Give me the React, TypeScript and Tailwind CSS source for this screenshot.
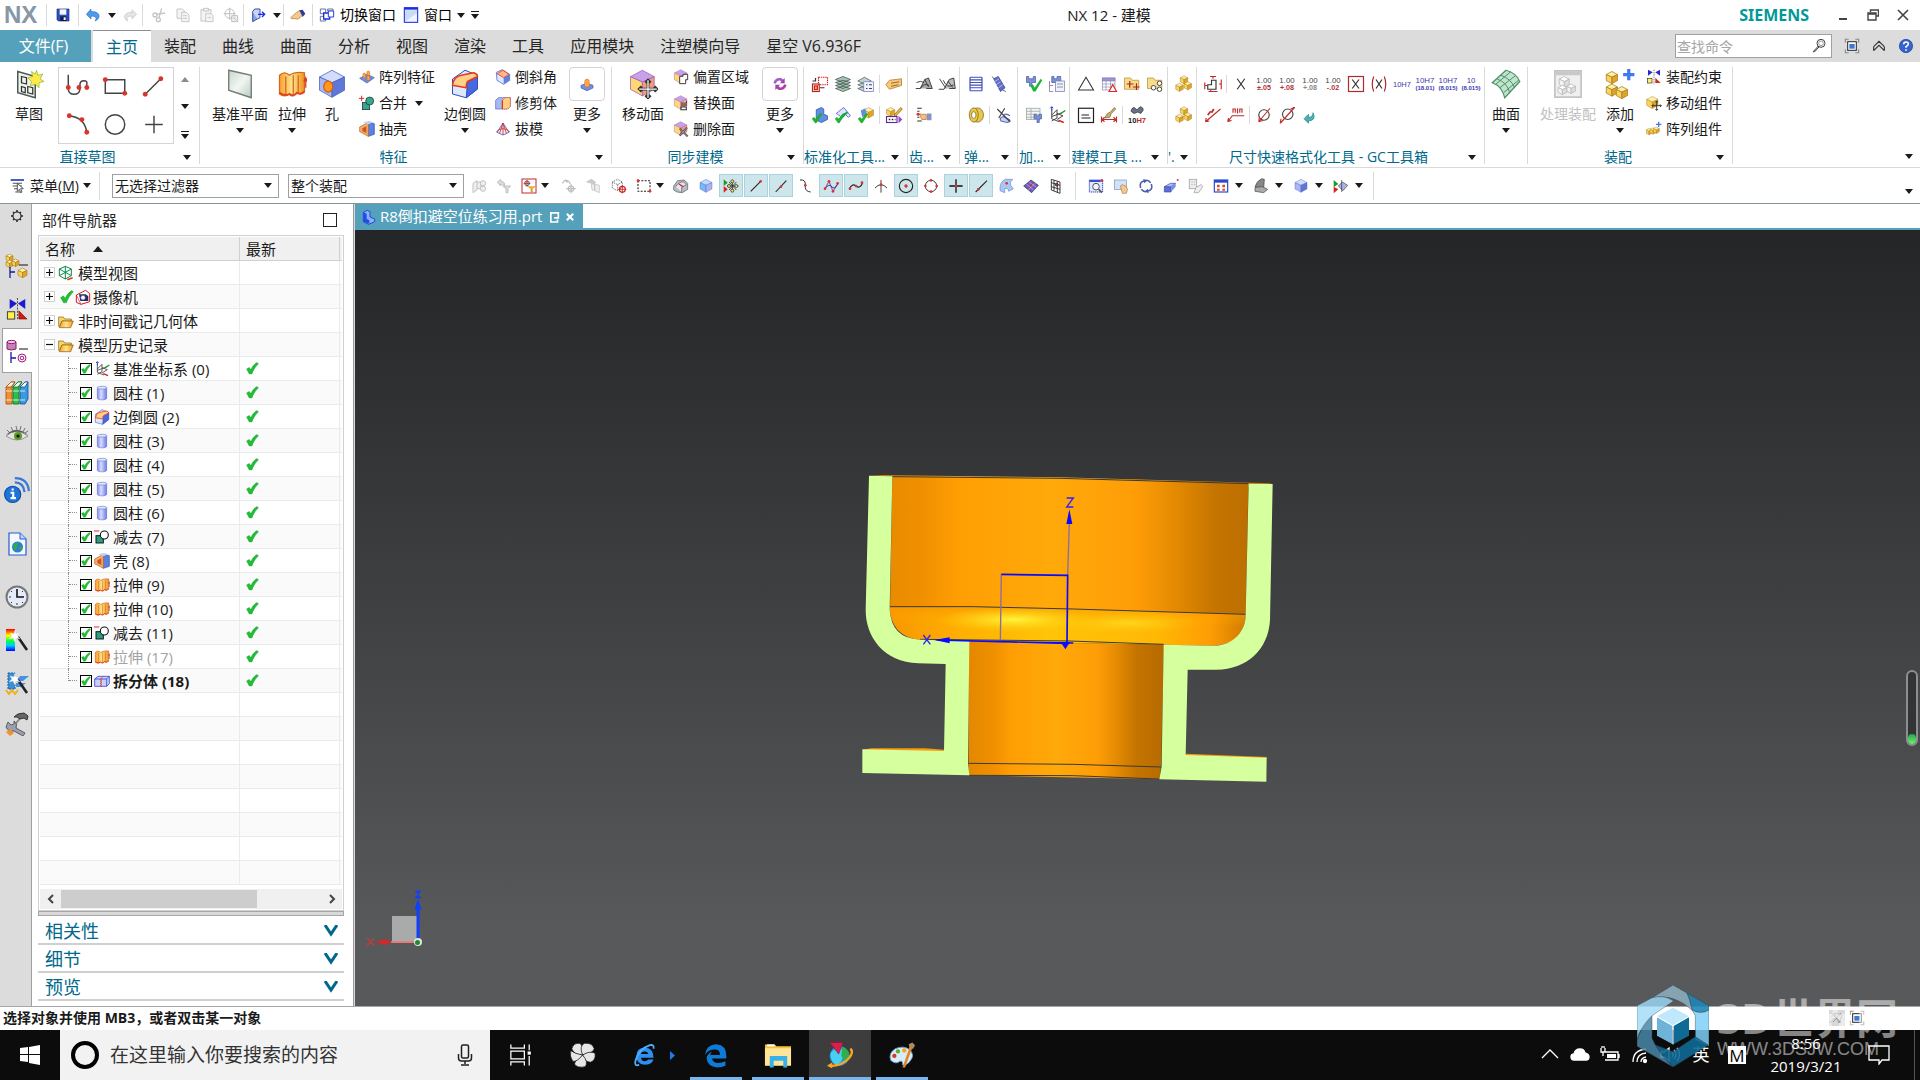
import React, { useState } from 'react';
import clsx from 'clsx';

/* ---------- drawing helpers, all on a 24 unit grid ---------- */

interface CubeProps {
  x?: number;
  y?: number;
  s?: number;
  top?: string;
  left?: string;
  right?: string;
  line?: string;
}

const Cube = ({ x = 3, y = 2, s = 18, top = '#d3dcfb', left = '#a9b8f3', right = '#5f78d8', line = '#4a5fb8' }: CubeProps) => (
  <g stroke={line} strokeWidth={0.6} strokeLinejoin="round">
    <path d={`M${x} ${y + s * 0.27}L${x + s / 2} ${y}L${x + s} ${y + s * 0.27}L${x + s / 2} ${y + s * 0.5}Z`} fill={top} />
    <path d={`M${x} ${y + s * 0.27}L${x + s / 2} ${y + s * 0.5}V${y + s * 1.08}L${x} ${y + s * 0.8}Z`} fill={left} />
    <path d={`M${x + s} ${y + s * 0.27}L${x + s / 2} ${y + s * 0.5}V${y + s * 1.08}L${x + s} ${y + s * 0.8}Z`} fill={right} />
  </g>
);

const Gold = (p: CubeProps) => <Cube top="#fff0a8" left="#f8d458" right="#dfa52a" line="#a87a1c" {...p} />;

const Violet = () => <Cube x={2} y={1} s={19} top="#c9a0ea" left="#ffd873" right="#f39a7c" line="#9a5fb5" />;

const Dot = ({ x, y, r = 2, c = '#d9342b' }: { x: number; y: number; r?: number; c?: string }) => (
  <circle cx={x} cy={y} r={r} fill={c} />
);

const Tick = ({ x = 0, y = 0 }: { x?: number; y?: number }) => (
  <path d="M2 13l4-3 3 4 8-11 4 1L10 21H8z" fill="#1fb52f" stroke="#0c8a1c" strokeWidth={0.6} transform={`translate(${x} ${y}) scale(.7)`} />
);

const Dim = ({ up, low, c = '#b03038', lowC }: { up: string; low: string; c?: string; lowC?: string }) => (
  <g fontFamily="Liberation Sans" textAnchor="middle" fontSize={10.5}>
    <text x={12} y={10} fill={c === '#b03038' ? '#444' : c}>{up}</text>
    <text x={12} y={20} fill={lowC ?? c} fontSize={low.length > 5 ? 8 : 9.5} fontWeight="bold">{low}</text>
  </g>
);

const Roll = () => (
  <g>
    <path d="M5 4v16c0 3 14 3 14 0V4z" fill="url(#cylFill)" stroke="#5566c8" strokeWidth={0.8} />
    <ellipse cx={12} cy={4} rx={7} ry={2.2} fill="#dfe5ff" stroke="#5566c8" strokeWidth={0.8} />
  </g>
);

const Extrude = () => (
  <g stroke="#d2691e" strokeWidth={1}>
    <path d="M2 5q4-4 8 0 4-3 12-2v15q-3 3-6 1-3 3-6 1-4 3-8 0z" fill="url(#goldFill)" />
    <path d="M7 6v15M13 5v15M17 5v14" fill="none" />
    <path d="M2 19q4 3 8 1 3 3 6-1 3 2 6-1" fill="none" stroke="#e2441f" strokeWidth={1.5} />
  </g>
);

const Blend = () => (
  <g strokeLinejoin="round" strokeWidth={0.8}>
    <path d="M2 8L12 1L22 5V16L13 23L2 20Z" fill="#dfe7ff" stroke="#3050c0" />
    <path d="M14 11L22 5V16L13 23Z" fill="#4668e0" stroke="#3050c0" />
    <path d="M2 13Q3 6 9 5L19 3Q22 4 22 6L14 10Q13 11 13 15Z" fill="#ffd08a" stroke="#e8381c" strokeWidth={1.2} />
  </g>
);

const Wand = () => (
  <g>
    <path d="M13 9L22 22" stroke="#222" strokeWidth={2.6} />
    <path d="M10 2l1 4 4-1-3 3 3 3-4-1-1 4-2-4-4 1 3-3-2-3 4 1z" fill="#fff" stroke="#ddd" strokeWidth={0.4} />
  </g>
);

const SheetTable = () => (
  <g stroke="#7780a8" strokeWidth={0.8}>
    <rect x={3} y={4} width={17} height={16} fill="#fff" />
    <rect x={3} y={4} width={17} height={4} fill="#a58fd8" />
    <path d="M3 12H20M3 16H20M8 8V20M14 8V20" />
  </g>
);

const icons: Record<string, React.ReactNode> = {
  save: (<g><path d="M3 3h18v18H5l-2-2z" fill="#2f4fc0" stroke="#142a80" /><rect x={7} y={3.5} width={10} height={8} fill="#f4f6ff" /><rect x={8} y={14} width={9} height={7} fill="#111a50" /><rect x={13} y={15.500} width={3} height={4} fill="#fff" /></g>),
  undo: <path d="M2 11L9 3v4c9-1 13 4 12 8-1 3-3 5-6 6 3-4 2-8-6-7v4z" fill="#4d9bea" stroke="#1c5fc0" strokeWidth={0.8} />,
  redo: <path d="M22 11L15 4v4C7 7 3 12 4 16c1 3 2 4 5 5-3-4-1-8 6-7v4z" fill="#e4e4e4" stroke="#bbb" strokeWidth={0.8} />,
  cut: <g fill="none" stroke="#c4c4c4" strokeWidth={2}><circle cx={6} cy={12} r={3} /><circle cx={11} cy={19} r={3} /><path d="M8 11L21 9M12 16L16 2" /></g>,
  copy: <g fill="#f4f4f4" stroke="#c4c4c4" strokeWidth={1.4}><path d="M3 3h8l3 3v11H3z" /><path d="M10 8h7l4 4v10H10zM12 13h6M12 17h6" /></g>,
  paste: <g fill="#f4f4f4" stroke="#c4c4c4" strokeWidth={1.4}><rect x={3} y={4} width={15} height={17} /><rect x={7} y={2} width={7} height={4} /><path d="M10 10h8l3 3v9H10zM13 16h5" /></g>,
  move: <g fill="none" stroke="#bbb" strokeWidth={1.4}><circle cx={10} cy={10} r={7} /><path d="M10 1V19M1 10H19" /><path d="M13 13h9v9h-9zM15 15l5 5" fill="#eee" /></g>,
  exit: <g stroke="#1b2f8a" strokeWidth={1.2}><path d="M4 7l7-4v15l-7 4z" fill="#8aa4e8" /><path d="M4 7l3-4h8v13l-4 2" fill="#c8d4f8" /><path d="M12 11h9m-3-4l4 4-4 4" fill="none" stroke="#1c2fe0" strokeWidth={2} /></g>,
  hand: <g><path d="M1 16l9-8 5-3 5 6-5 5-3 2H9l-3-1-3 1z" fill="#f5c987" stroke="#a8773a" /><path d="M14 5l5-1 4 6-4 5z" fill="#2f3d9a" /></g>,
  switch: <g fill="#fff" stroke="#5a6a9a" strokeWidth={1.4}><path d="M2 3h8v7H2zM2 14h8v7H2zM13 3h8v3h-8z" /><path d="M7 9h9v9H7z" stroke="#1c2fe0" strokeWidth={2} /><path d="M14 6h8v9h-8z" stroke="#1c2fe0" /></g>,
  window: <g><rect x={2} y={1} width={20} height={22} fill="#eef4ff" stroke="#1c2fe0" strokeWidth={1.6} /><rect x={2} y={1} width={20} height={3} fill="#1c2fe0" /><path d="M3 5h18v4L3 22z" fill="#c8dcf8" /></g>,
  full: <g><path d="M2 7V2h5M17 2h5v5M22 17v5h-5M7 22H2v-5" fill="none" stroke="#888" strokeWidth={1.6} /><rect x={5.500} y={5.500} width={13} height={13} fill="#fff" stroke="#333" strokeWidth={1.6} /><rect x={8} y={9} width={8} height={7} fill="#3f78d0" /></g>,
  up: <path d="M4 13l8-8 8 8M4 19l8-8 8 8M4 13v6M20 13v6" fill="none" stroke="#333" strokeWidth={1.7} />,
  help: <g><circle cx={12} cy={12} r={10} fill="#3664cc" stroke="#1d3f94" /><path d="M8.500 9.500q0-3.500 3.500-3.500t3.500 3q0 2-3.500 4v1.500M12 17v2" fill="none" stroke="#fff" strokeWidth={2.4} /></g>,
  search: <g fill="none" stroke="#333" strokeWidth={1.4}><circle cx={15} cy={8} r={6} /><circle cx={15} cy={8} r={3.5} stroke="#999" /><path d="M11 12l-8 9M12.500 13l-8 8.500" /></g>,

  // ribbon, large
  sketch: <g><path d="M3 2l14 4v17L3 19z" fill="#eef3ee" stroke="#4a5a52" strokeWidth={1.2} /><path d="M6 6l4 1v5l-4-1zM6 14l3 1v4l-3-1zM11 14l4 1v5l-4-1z" fill="none" stroke="#333" /><path d="M18 1l1 4 4-1-2 4 3 2-4 1v4l-3-3-4 2 1-4-3-3 4-1-1-4 3 2z" fill="#ffe94a" stroke="#8fb83a" strokeWidth={0.6} /></g>,
  plane: <path d="M3 1l18 4v18L3 17z" fill="url(#planeFill)" stroke="#6f7c74" strokeWidth={1.1} />,
  extrude: <g><Extrude /><path d="M23 15V8m-1.500 2l1.500-3 1 3" stroke="#d9342b" fill="none" /></g>,
  hole: <g><Cube x={2} y={1} s={20} /><ellipse cx={9} cy={14} rx={3.6} ry={4.400} fill="#ff9a1f" stroke="#d85a10" /></g>,
  blend: <Blend />,
  moveFace: <g><Violet /><path d="M16 9v14M9 16h14M14 11l2-2 2 2M14 21l2 2 2-2M11 14l-2 2 2 2M21 14l2 2-2 2" fill="none" stroke="#333" strokeWidth={2.2} /><path d="M16 9v14M9 16h14" stroke="#fff" strokeWidth={1} /></g>,
  more1: <g><path d="M3 14l9-3 9 3v4l-9 4-9-4z" fill="#6f8fe0" stroke="#3f5aac" /><path d="M8 15l1-9q3-3 6 0l1 9-4 2z" fill="#ffa64a" stroke="#d2691e" strokeWidth={0.8} /></g>,
  more2: <g fill="none" strokeWidth={4}><path d="M4 11q2-7 9-6l4 3" stroke="#a25fc8" /><path d="M20 13q-2 7-9 6l-4-3" stroke="#b03fa0" /><path d="M19 3v8h-7zM5 21v-8h7z" fill="#a03fb8" stroke="none" /></g>,
  surface: <g><path d="M1 11L12 1Q20 3 23 10L11 23Q9 14 1 11z" fill="#bfe6cc" stroke="#4f8f68" /><path d="M5 8q8 3 10 11M8 5q8 3 11 10M4 12L16 2M7 15L20 5M10 19L22 9" fill="none" stroke="#4f8f68" strokeWidth={0.8} /></g>,
  processAsm: <g><rect x={1.500} y={1.500} width={21} height={21} fill="#efefef" stroke="#c4c4c4" strokeWidth={1.4} /><path d="M2 2h20v3H2z" fill="#c8c8c8" /><Cube x={5} y={6} s={8} top="#fff" left="#f4f4f4" right="#ddd" line="#b5b5b5" /><Cube x={11} y={12} s={7} top="#fff" left="#f4f4f4" right="#ddd" line="#b5b5b5" /><Cube x={4} y={13} s={7} top="#fff" left="#f4f4f4" right="#ddd" line="#b5b5b5" /></g>,
  addAsm: <g><Gold x={1} y={2} s={9} /><Gold x={1} y={12} s={9} /><Gold x={9} y={14} s={9} /><path d="M19 0v9M14.500 4.500h9" stroke="#3f78f0" strokeWidth={2.6} /></g>,

  // ribbon, small
  pattern: <g><path d="M1 14l11-6 11 5-11 8z" fill="#6f8fe0" stroke="#3f5aac" /><path d="M6 13V7q2-2 4 0v6zM12 17v-6q2-2 4 0v6zM12 9V4q2-2 4 0v6z" fill="#ffa64a" stroke="#d2691e" strokeWidth={0.8} /></g>,
  unite: <g><rect x={5} y={11} width={11} height={11} fill="#32a890" stroke="#222" /><circle cx={16} cy={9} r={6} fill="#32a890" stroke="#222" /><path d="M4 1v8M0 5h8" stroke="#d92020" strokeWidth={1.4} /></g>,
  subtract: <g><rect x={3} y={10} width={11} height={11} fill="#2a9d84" stroke="#111" strokeWidth={1.4} /><circle cx={15.500} cy={9} r={6} fill="#fff" stroke="#111" strokeWidth={1.6} /><path d="M9 15V10q0 5 5 5z" fill="#2a9d84" /><path d="M0 3h8" stroke="#d92020" strokeWidth={1.4} /></g>,
  shell: <g><path d="M14 1l9 3v16l-9 3z" fill="#5a80e0" stroke="#2f4fb0" /><path d="M1 9L14 2v21L1 16z" fill="#f7ad66" stroke="#b0602a" /><path d="M5 11l6-3v10l-6-3z" fill="#c8552a" /><path d="M6 2l9-2 6 2-7 3z" fill="#c4d0f0" /></g>,
  chamfer: <g><path d="M2 5l9-4 11 7v9l-9 6L3 17z" fill="#dfe7ff" stroke="#3050c0" /><path d="M13 13l9-5v9l-9 6z" fill="#6080e0" /><path d="M3 7l9-5 9 6-8 5z" fill="#ffb98a" stroke="#e8381c" strokeWidth={1.2} /></g>,
  trim: <g><path d="M1 8l4-4h18v13l-4 4H1z" fill="#aab8f0" stroke="#5060b8" /><path d="M11 8l4-4h8v13l-4 4h-8z" fill="#ffcf80" stroke="#e8381c" strokeDasharray="2 1" /><path d="M11 8v13" stroke="#d22" strokeWidth={1.5} /></g>,
  draft: <g fill="none" strokeWidth={1.3}><path d="M12 3L3 17l9 4 9-4z" stroke="#4f60b0" fill="#eef" /><path d="M12 3v18M12 3L7 18M12 3l5 15" stroke="#d2382b" /><path d="M2 16q10-9 20 0" stroke="#d2382b" /></g>,
  offset: <g><Violet /><path d="M10 11h5v-3h7v8h-3v6h-9z" fill="#fff" stroke="#333" strokeWidth={1.4} /></g>,
  replace: <g><Violet /><path d="M12 12h8v-3M12 15h9M12 18h8v4h-8z" fill="#fff" stroke="#333" strokeWidth={1.6} /></g>,
  delFace: <g><Violet /><path d="M10 11l12 12M21 10L10 22" stroke="#444" strokeWidth={3} /><path d="M10 11l12 12M21 10L10 22" stroke="#ccc" strokeWidth={1} /></g>,

  // GC toolkits
  gcTree: <g fill="none" strokeWidth={1.6}><rect x={2} y={12} width={9} height={10} stroke="#b02a2a" /><rect x={4.500} y={14.500} width={4} height={5} fill="#ffb02a" stroke="#c22" /><rect x={10} y={3} width={12} height={10} stroke="#d22" strokeDasharray="2 1" /><path d="M2 8h4V4M12 17h6" stroke="#333" /></g>,
  layers: <g fill="#a9c4b4" stroke="#3f5048" strokeWidth={1}><path d="M2 18l10-3 10 3-10 4zM2 14l10-3 10 3-10 4zM2 10l10-3 10 3-10 4zM2 6l10-4 10 4-10 4z" /></g>,
  layersDoc: <g fill="#c0d4c8" stroke="#4f6058" strokeWidth={1}><path d="M1 18l9-3 9 3-9 4zM1 13l9-3 9 3-9 4zM1 8l9-5 9 5-9 4z" /><rect x={9} y={9} width={13} height={13} fill="#f0f4ff" stroke="#7a80c8" /><path d="M12 13h2m2 0h4m-8 5h2m2 0h4" stroke="#445" strokeWidth={1.5} /></g>,
  tag: <g><path d="M1 13l5-6 16-2v9L6 19z" fill="#f8c77a" stroke="#b0752a" /><path d="M8 11l11-2M8 15l10-2" stroke="#7a4a1a" /></g>,
  gcPart: <g><path d="M7 5l7-3 3 2v7l5 2v5l-8 4-7-3z" fill="#5f8fe0" stroke="#2f50a8" /><Tick x={0} y={8} /></g>,
  gcHammer: <g><path d="M3 10L13 2l4 5 5 6-3 2-5-5-5 4z" fill="#dfe6ff" stroke="#3f50d0" /><path d="M5 20L18 8" stroke="#2a9d4a" strokeWidth={3} /><Tick x={0} y={8} /></g>,
  gcBox: <g><Gold x={9} y={2} s={13} /><path d="M5 6l6-3 2 8-6 4z" fill="#5f8fe0" /><Tick x={0} y={8} /></g>,
  gcEdit: <g><Gold x={2} y={2} s={11} /><path d="M12 12l9-10 2 2-9 10z" fill="#f5b83a" stroke="#8a5a1a" /><rect x={2} y={14} width={14} height={8} fill="#fff" stroke="#5a2a9a" strokeWidth={1.5} /><path d="M5 18h2m2 0h2m2 0h1" stroke="#222" strokeWidth={2} /><path d="M18 13l5 5-5 5z" fill="#a03fc8" /></g>,
  gear1: <g fill="#a8a8a8" stroke="#333" strokeWidth={1.2}><path d="M1 18h6l6-12 5-2 5 14h-8" /><path d="M7 18q5-8 12-4M2 10q6-3 10 0M13 6l5 10" fill="none" /></g>,
  gear2: <g fill="#bdbdbd" stroke="#333" strokeWidth={1.2}><path d="M1 19h7l7-13 6-2 2 14h-8" /><path d="M2 5l8 12M7 7q5 12 14 6M13 8l7 9" fill="none" /></g>,
  gearHand: <g><path d="M3 3h6M3 7h3M3 11h4M3 15h3M3 20h6" stroke="#333" strokeWidth={1.5} /><path d="M6 11h9v7H9z" fill="#f5c080" stroke="#b07a3a" /><rect x={16} y={10} width={6} height={9} fill="#8a90c8" /><Dot x={4} y={11} /></g>,
  springV: <g fill="none" stroke="#4050b8" strokeWidth={1.6}><path d="M4 3h16M4 6.500h16M4 10h16M4 13.500h16M4 17h16M4 21h16M4 3v18M20 3v18" /></g>,
  springD: <g><path d="M5 5l6-3 9 15-6 5z" fill="#6070c8" stroke="#303f90" /><path d="M6 9l6-4M8 13l6-4M11 17l6-4" stroke="#c8d0f8" /><path d="M5 5L3 2M17 20l4 2" stroke="#333" /></g>,
  disc: <g fill="#e8c84a" stroke="#7a6418"><ellipse cx={14} cy={12} rx={8} ry={9.500} /><ellipse cx={9} cy={12} rx={6} ry={9.500} /><ellipse cx={9} cy={12} rx={3} ry={4.500} fill="#fff" /></g>,
  springX: <g fill="none" stroke="#6070b8" strokeWidth={1.6}><path d="M8 20q-3-4 3-6l8 4q3 3-3 4zM12 12q3-3 8 1" fill="#c8d0f4" /><path d="M3 4l17 17M13 3L5 16" stroke="#444" /></g>,
  camCheck: <g><path d="M2 2h3v3h6V2h3v8H9v5H6v-5H2z" fill="#7a90d8" stroke="#5060a8" /><path d="M7 14l3-2 3 5 8-12 2 2-9 15h-3z" fill="#1fb53a" /></g>,
  camDoc: <g><path d="M5 2h3v3h4V2h5v8H5z" fill="#7a90d8" stroke="#5060a8" /><rect x={10} y={8} width={12} height={14} fill="#eef2ff" stroke="#7a80a8" /><path d="M2 8v14h5M2 14h5M12 12h8M12 16h8" fill="none" stroke="#7a6a9a" /></g>,
  camTable: <g stroke="#9aa0a8"><rect x={2} y={3} width={18} height={15} fill="#f4f6f0" /><path d="M2 7h18M2 11h18M2 15h18M8 3v15" /><path d="M12 11h3v2h4v-2h3v6h-3v5h-3v-5h-4z" fill="#7a90d8" stroke="#5060a8" /></g>,
  csys: <g fill="none" stroke="#444" strokeWidth={1.3}><path d="M5 4v13l10 4M5 12l7-7v11l-7 4M5 14l14-5M12 10l8 3-8 5" /><path d="M5 6V1m-2 2l2-2 2 2" stroke="#2030d0" /><path d="M17 10l6-4" stroke="#1a9a2a" strokeWidth={2} /><path d="M14 19l7 3" stroke="#d22" strokeWidth={2} /></g>,
  tri: <path d="M12 3L22 20H2z" fill="none" stroke="#333" strokeWidth={1.4} />,
  tblTri: <g><SheetTable /><path d="M17 13l5 9H12z" fill="#fff" stroke="#d22" strokeWidth={1.5} /></g>,
  folderX: <g><path d="M2 4h8l2 3h9v12H2z" fill="#f8dc8a" stroke="#b8923a" /><path d="M9 8v9M5 12h9M18 11v9M13 16h9" stroke="#a8201a" strokeWidth={1.6} /></g>,
  folderO: <g><path d="M2 4h8l2 3h9v11H2z" fill="#f8dc8a" stroke="#b8923a" /><g fill="#fff" stroke="#444" strokeWidth={1.3}><circle cx={10} cy={17} r={3} /><circle cx={18} cy={11} r={3} /><circle cx={18} cy={19} r={3} /></g></g>,
  note: <g fill="none" stroke="#222" strokeWidth={1.6}><rect x={2} y={3} width={20} height={19} /><path d="M6 12h10M6 16h12" /></g>,
  brush: <g><path d="M10 10l4-2 5-6 2 2-6 6-2 5-7 1z" fill="#c8b070" stroke="#7a6a3a" /><path d="M2 14v8M22 14v8M3 18h18M6 15l-3 3 3 3M18 15l3 3-3 3" fill="none" stroke="#c02a2a" strokeWidth={1.5} /></g>,
  bino: <g><path d="M4 7q1-5 4-5l4 3 4-4q5 1 4 5l-3 4-4-2-5 2z" fill="#6a7088" stroke="#333" /><text x={12} y={22} fontSize={10} fontWeight="bold" textAnchor="middle" fontFamily="Liberation Sans" fill="#222">10<tspan fill="#c02a2a">H7</tspan></text></g>,
  boxes: <g><Gold x={7} y={1} s={10} /><Gold x={1} y={11} s={10} /><Gold x={12} y={9} s={10} /></g>,
  dimAll: <g fill="none" stroke="#c02a2a" strokeWidth={1.5}><path d="M8 2h8M12 2v3M6 22h12M1 10v9M1 14h3M23 6v13M20 12h3M9 20v2" /><path d="M5 19v-6h5V7h6v12z" stroke="#333" /></g>,
  x: <path d="M7 5l10 14M17 5L7 19" stroke="#333" strokeWidth={1.6} />,
  d1: <Dim up="1.00" low="±.05" />,
  d2: <Dim up="1.00" low="+.08" />,
  d3: <Dim up="1.00" low="+.08" lowC="#888" />,
  d4: <Dim up="1.00" low="-.02" />,
  boxX: <g fill="none" stroke="#333" strokeWidth={1.6}><rect x={2} y={2} width={20} height={20} stroke="#b02a2a" /><path d="M7 6l9 12M16 6L7 18" /></g>,
  parX: <g fill="none" stroke="#333" strokeWidth={1.6}><path d="M5 2q-4 10 0 20M19 2q4 10 0 20" stroke="#b02a2a" /><path d="M8 6l8 12M16 6L8 18" /></g>,
  h7: <text x={12} y={16} fontSize={10} textAnchor="middle" fontFamily="Liberation Sans" fill="#3a3ab0">10H7</text>,
  h7a: <Dim up="10H7" low="(18.01)" c="#3a3ab0" />,
  h7b: <Dim up="10H7" low="(8.015)" c="#3a3ab0" />,
  h7c: <Dim up="10" low="(8.015)" c="#3a3ab0" />,
  dimR: <g stroke="#c02a2a" fill="none" strokeWidth={1.5}><path d="M2 21L22 4M2 21l5-1M2 21l1-5" /><path d="M5 12l4-5M10 9l3-5" strokeWidth={2.4} /></g>,
  dimRR: <g stroke="#c02a2a" fill="none" strokeWidth={1.5}><path d="M1 21l6-8h16M1 21l1-5M1 21l5-2" /><path d="M8 9V4h3v5M14 3v7M17 9V4h3v5" /></g>,
  dia: <g fill="none" strokeWidth={1.5}><circle cx={12} cy={12} r={7} stroke="#444" /><path d="M5 21L20 3M5 21l1-7M5 21l6-2" stroke="#c02a2a" /></g>,
  dia2: <g fill="none" strokeWidth={1.5}><circle cx={13} cy={11} r={7} stroke="#444" /><path d="M3 23L22 2M3 23l1-6M22 2l-5 2" stroke="#c02a2a" /></g>,
  back: <path d="M4 17l6-6v4q6 0 6-6 5 10-6 11v3z" fill="#4ab0b0" stroke="#2a8a8a" />,

  constrain: <g><path d="M3 1l7 4-7 5zM21 1l-7 4 7 5z" fill="#2a2ac8" /><path d="M12 1v22" stroke="#333" strokeDasharray="2 1.500" /><rect x={2} y={14} width={7} height={7} fill="#fff06a" stroke="#333" /><path d="M14 13l8 8h-8z" fill="#d22a1a" /></g>,
  moveComp: <g><Gold x={1} y={2} s={17} /><path d="M16 9v14M9 16h14M14 11l2-2 2 2M14 21l2 2 2-2M11 14l-2 2 2 2M21 14l2 2-2 2" fill="none" stroke="#333" strokeWidth={1.4} /></g>,
  patComp: <g><Gold x={0} y={11} s={9} /><Gold x={6} y={10} s={9} /><Gold x={11} y={9} s={9} /><path d="M19 1v8M15 5h8" stroke="#3f78f0" strokeWidth={2} /></g>,

  // selection bar
  menu: <g stroke="#555" strokeWidth={1.6} fill="#fff"><path d="M1 3h20" stroke="#4a60c0" strokeWidth={3} /><path d="M4 8h14M4 12h14M6 16h10M8 21h8" /><path d="M11 8v12l3-3 2 5 2-1-2-5h4z" stroke="#333" strokeWidth={1.2} /></g>,
  s1: <g fill="#eee" stroke="#bbb" strokeWidth={1.3}><path d="M3 8l6-4v14l-6 4zM9 6h6v10H9" /><circle cx={18} cy={8} r={4} /><circle cx={18} cy={16} r={4} /></g>,
  s2: <g fill="#ddd" stroke="#bbb" strokeWidth={1.3}><path d="M2 6l5-4v3q7 0 6 7-2-3-6-3v3z" /><path d="M10 12h12l-4 4v6h-3v-6z" /></g>,
  s3: <g fill="none" strokeWidth={1.5}><rect x={1.500} y={1.500} width={21} height={21} stroke="#c02a2a" /><circle cx={9} cy={8} r={3.500} stroke="#555" /><path d="M9 3v10M4 8h10" stroke="#a33" /><path d="M11 13h10l-4 3v5h-2v-5z" fill="#f5b82a" stroke="#c08a1a" strokeWidth={0.8} /></g>,
  s4: <g fill="none" stroke="#bbb" strokeWidth={1.7}><path d="M2 8l4-5 4 4M5 4q6-2 9 5" /><circle cx={15} cy={16} r={4} /><path d="M15 9v14M8 16h14" /></g>,
  s5: <g fill="#ccc" stroke="#bbb"><path d="M1 6l7-4 6 4-2 5-3-3z" /><path d="M13 9l7 2v11l-7-3zM8 9h5v9H9z" fill="#eee" /></g>,
  s6: <g fill="none" strokeWidth={1.3}><path d="M2 6l8-4 7 4v8l-8 5-7-4zM2 6l8 4 7-4M10 10v8" stroke="#444" strokeDasharray="1.500 1.500" /><circle cx={17} cy={17} r={4.500} stroke="#c22" strokeWidth={1.8} /><path d="M17 11v12M11 17h12" stroke="#c22" /></g>,
  s7: <g fill="none"><rect x={3} y={4} width={18} height={16} stroke="#222" strokeWidth={1.6} strokeDasharray="3 2" /><Dot x={3} y={4} /><Dot x={21} y={20} /></g>,
  s8: <g><path d="M1 12l6-8 10-1 5 5v9l-8 5-8-1-5-3z" fill="#b8bcc8" stroke="#555" /><path d="M4 13q5-8 12-7l4 4-7 4v7" fill="#e4e6ee" stroke="#555" /><path d="M9 9l6 4" stroke="#d22" strokeWidth={2} /></g>,
  s9: <Cube top="#bcdcff" left="#7ab8f8" right="#a8b4f0" />,
  snapAll: <g><path d="M1 2l6 5-6 5z" fill="#1a9a2a" /><path d="M1 12l6 5-6 5z" fill="#d22" /><path d="M14 3v18M6 12h17M9 6l11 12M20 6L9 18" stroke="#222" strokeWidth={1.2} /><g fill="#f8d84a" stroke="#222"><circle cx={14} cy={5} r={2.300} /><circle cx={9} cy={12} r={2.300} /><circle cx={20} cy={12} r={2.300} /><circle cx={14} cy={19} r={2.300} /></g></g>,
  snapEnd: <g><path d="M4 20L19 5" stroke="#222" strokeWidth={1.6} /><Dot x={19} y={5} /></g>,
  snapMid: <g><path d="M4 21L20 4" stroke="#222" strokeWidth={1.6} /><Dot x={12} y={13} /></g>,
  snapTan: <g><path d="M3 3q8-1 8 6v5q0 6 8 7" fill="none" stroke="#333" strokeWidth={1.5} /><Dot x={11} y={11} /></g>,
  snapPoly: <g><path d="M3 16L9 5l6 15 7-11" fill="none" stroke="#8a4ad0" strokeWidth={1.6} /><path d="M3 16q6-8 10-3t9-4" fill="none" stroke="#333" strokeWidth={1.3} /><Dot x={3} y={16} /><Dot x={9} y={5} /><Dot x={15} y={20} /><Dot x={22} y={8} /></g>,
  snapSpline: <g><path d="M2 17q4-10 10-5t10-5" fill="none" stroke="#222" strokeWidth={1.7} /><Dot x={3} y={16} /><Dot x={12} y={12} /><Dot x={21} y={7} /></g>,
  snapInt: <g><path d="M12 3v19M3 15q9-10 18 0" fill="none" stroke="#333" strokeWidth={1.4} /><Dot x={12} y={10} /></g>,
  snapCen: <g><circle cx={12} cy={12} r={10} fill="none" stroke="#222" strokeWidth={1.7} /><Dot x={12} y={12} r={2.500} /></g>,
  snapQuad: <g><circle cx={12} cy={12} r={8.500} fill="none" stroke="#333" strokeWidth={1.4} /><Dot x={12} y={3.500} /><Dot x={12} y={20.500} /><Dot x={3.500} y={12} /><Dot x={20.500} y={12} /></g>,
  snapPt: <g><path d="M12 2v20M2 12h20" stroke="#111" strokeWidth={2} /><Dot x={12} y={12} /></g>,
  snapCrv: <g><path d="M4 21L21 4" stroke="#222" strokeWidth={1.6} /><Dot x={8} y={17} /></g>,
  snapSrf: <g><path d="M3 19Q2 6 11 2h11q-5 4-3 9l4 5-7 4q-1-6-6-4v6z" fill="#a8c8f4" stroke="#6a8ac8" /><Dot x={13} y={8} /></g>,
  snapFac: <g><path d="M1 12L12 3l11 8-10 11z" fill="#6a5ac0" stroke="#333" /><path d="M5 9l11 9M9 6l11 8M8 18L18 8" stroke="#c8c0f0" /><Dot x={12} y={11} /></g>,
  snapGrid: <g fill="none" stroke="#222" strokeWidth={1.3}><path d="M5 2l13 4v17L5 18zM9 3v16M14 5v17M5 7l13 4M5 13l13 4" /><Dot x={13} y={10} /></g>,
  fit: <g><rect x={2} y={3} width={20} height={18} fill="#dfe8fc" stroke="#2a3ac8" strokeWidth={1.4} strokeDasharray="2 1" /><path d="M2 3h17v3H2z" fill="#3a50d0" /><circle cx={12} cy={13} r={5} fill="#eef6ff" stroke="#555" strokeWidth={1.5} /><path d="M16 17l5 5" stroke="#555" strokeWidth={2.400} /><Dot x={21} y={4} /></g>,
  pan: <g><rect x={2} y={3} width={18} height={14} fill="#d4e2f8" stroke="#7a90b8" /><path d="M11 12l3-2 5 2 3 5-2 6h-6z" fill="#f0c890" stroke="#a87a4a" /></g>,
  rotate: <g fill="none" stroke="#4a60a8" strokeWidth={2.400}><path d="M4 15q-3-9 6-11M20 9q3 9-6 11" /><path d="M10 4q5-2 9 3M14 20q-5 2-9-3" /><path d="M8 1l6 3-5 4zM16 23l-6-3 5-4z" fill="#4a60a8" stroke="none" /></g>,
  persp: <g><path d="M2 13h10v8H2z" fill="#5a70d8" stroke="#3a4aa8" /><path d="M2 13l9-5h8l-7 5z" fill="#b0bcf4" stroke="#3a4aa8" /><path d="M12 13l7-5v5l-7 8z" fill="#8090e0" /><Dot x={22} y={3} r={1.500} /></g>,
  grayA: <g fill="#eee" stroke="#aaa" strokeWidth={1.3}><rect x={2} y={2} width={11} height={14} /><path d="M5 6h2m2 0h2m-6 4h2m2 0h2M12 14l8-4 2 3-6 9H9z" /></g>,
  layout: <g><rect x={2} y={3} width={20} height={18} fill="#fff" stroke="#2a4ad0" strokeWidth={1.8} /><path d="M2 3h20v4H2z" fill="#2a4ad0" /><path d="M6 10h4v4H6zM14 10h4v4h-4zM6 16h4v3H6zM14 16h4v3h-4z" fill="#e04a2a" /></g>,
  shade: <g><path d="M3 13q3-9 10-12l4 1-1 14z" fill="#888" stroke="#444" /><path d="M3 14l11-1 8 4-6 5-13-2z" fill="#aaa" stroke="#444" /></g>,
  cube: <Cube s={18} />,
  clip: <g><path d="M1 3l7 6-7 5z" fill="#1a9a2a" /><path d="M1 13l7 4-7 6z" fill="#d22" /><path d="M8 12l6-6 8 5-7 8z" fill="#a8b4e8" stroke="#444" /><path d="M13 3v18" stroke="#333" /></g>,

  // resource bar
  gear: <g fill="none" stroke="#222" strokeWidth={1.6}><circle cx={12} cy={12} r={6} /><path d="M12 3v3M12 18v3M3 12h3M18 12h3M6 6l2 2M16 16l2 2M6 18l2-2M16 8l2-2" strokeWidth={2.200} /></g>,
  asmNav: <g><Gold x={1} y={0} s={7} /><Gold x={1} y={6} s={7} /><Gold x={7} y={5} s={7} /><path d="M14 11h9" stroke="#111" /><path d="M5 13v11M5 18h5" stroke="#1a1a9a" strokeWidth={1.3} /><Gold x={13} y={14} s={9} /></g>,
  conNav: <g><path d="M4 1l8 5-8 6zM21 1l-8 5 8 6z" fill="#1a1ad0" /><path d="M12.500 0v24" stroke="#333" strokeDasharray="2 1.500" /><rect x={1.500} y={15} width={8} height={8} fill="#fff04a" stroke="#333" /><path d="M14 14l9 9h-9z" fill="#d21a10" stroke="#700" strokeWidth={0.6} /></g>,
  partNav: <g><path d="M2 3v7q4 2 9 0V3z" fill="#c880b8" stroke="#8a1a70" /><ellipse cx={6.500} cy={3} rx={4.500} ry={1.600} fill="#f0d0e8" stroke="#8a1a70" /><path d="M14 10h9" stroke="#111" /><path d="M6 13v11M6 19h5" stroke="#1a1a9a" strokeWidth={1.3} /><circle cx={17} cy={19} r={4} fill="none" stroke="#a01a80" /><circle cx={17} cy={19} r={1.800} fill="none" stroke="#a01a80" /></g>,
  books: (
    <g strokeWidth={0.8}>
      <path d="M1 6l5-5h4L7 6v17H1z" fill="#f09030" stroke="#a04a10" />
      <path d="M1 6l5-5h4L6 6z" fill="#fff4e0" stroke="#a04a10" />
      <path d="M8 6l5-5h4l-3 5v17H8z" fill="#2ac04a" stroke="#0a6a1a" />
      <path d="M8 6l5-5h4l-4 5z" fill="#f0fff0" stroke="#0a6a1a" />
      <path d="M15 6l5-5h3v17l-3 5h-5z" fill="#3a9ae0" stroke="#1a4a90" />
      <path d="M15 6l5-5h3l-3 5z" fill="#eef8ff" stroke="#1a4a90" />
      <path d="M1 10h6M1 19h6M8 10h6M8 19h6M15 10h5M15 19h5" stroke="#fff" />
    </g>
  ),
  eye: <g><path d="M1 14q10-9 22 0-11 8-22 0z" fill="#e4e4dc" stroke="#666" strokeWidth={0.6} /><path d="M1 13Q11 3 23 13q-11-7-22 0z" fill="#555" /><path d="M2 8l3 3M6 5l2 4M11 4l1 4M16 4l-1 4M20 6l-2 4M23 9l-3 2" stroke="#555" strokeWidth={0.8} /><circle cx={13} cy={14} r={4} fill="#5a9a2a" /><Dot x={13} y={14} r={1.600} c="#111" /></g>,
  info: <g><circle cx={8} cy={16} r={7.500} fill="#1f74d8" stroke="#0d4aa0" /><path d="M8 10.500v2M6 14.500h2.500v5M6 19.500h5" fill="none" stroke="#fff" strokeWidth={2} /><path d="M10 5q8 0 9 9M10 1q12 0 13 12" fill="none" stroke="#3a78d8" strokeWidth={2} /></g>,
  page: <g><path d="M4 1h11l6 6v16H4z" fill="#f4f8ff" stroke="#2a5ad0" strokeWidth={1.2} /><path d="M15 1v6h6" fill="#c0d4ff" stroke="#2a5ad0" /><circle cx={12.500} cy={15} r={5.500} fill="#2f7fd0" /><path d="M8 14q3-5 5-3l-1 4-2 4zM14 15l4-1-2 5z" fill="#2fae3a" /></g>,
  clock: <g><circle cx={12} cy={12} r={10.500} fill="#e4ecfa" stroke="#777" strokeWidth={2} /><path d="M12 4v8h7" fill="none" stroke="#111" strokeWidth={1.600} /><path d="M12 20v-2M4 12h2M6 6l1 1M18 18l-1-1M6 18l1-1M18 6l-1 1" stroke="#333" /></g>,
  colors: <g><rect x={1} y={1} width={9} height={22} fill="url(#rainbow)" /><Wand /></g>,
  weld: <g><path d="M3 2h7v16H3z" fill="#3a90d8" stroke="#1a5aa0" strokeDasharray="2 1" /><path d="M12 5h12l-6 5h-5zM11 12h10l-5 4h-5z" fill="#4a90e0" /><path d="M1 19l3 4 3-4 3 4 3-4" fill="none" stroke="#f0b020" strokeWidth={2} /><Wand /></g>,
  tools: (
    <g>
      <path d="M16 5L8 15" stroke="#888" strokeWidth={2} />
      <path d="M9 5q3-4 10-4l4 3-1 4-3-2-4 1-3-2z" fill="#666" stroke="#333" />
      <path d="M3 10l3 3 3-1v-3q4 3 2 7l9 5-2 3-9-5q-6 1-8-4z" fill="#9aa0b0" stroke="#444" strokeWidth={0.8} />
      <path d="M1 20l4-3 4 4-4 3z" fill="#f09030" />
    </g>
  ),

  // tree
  views: <g fill="none" strokeWidth={1.5} stroke="#0a8a4a"><path d="M2 6l9-4 9 4v10l-9 5-9-5zM2 6l9 5 9-5M11 2v19M2 16l9-5 9 5" /><path d="M14 22l8-3" stroke="#e03a1a" strokeWidth={2.400} /></g>,
  camera: <g><path d="M2 9l14-7 6 5v12l-13 4-7-3z" fill="#fff" stroke="#d21a1a" strokeWidth={1.5} /><path d="M6 8h10l4 3v7H8z" fill="#2a2a5a" /><circle cx={12} cy={13} r={3.500} fill="#fff" stroke="#2a4ad0" /><path d="M2 9l7 14" stroke="#d21a1a" /></g>,
  folder: <g stroke="#8a5a0a" strokeLinejoin="round"><path d="M1 6h7l2 3h10v3H6L2 20H1z" fill="#f8d868" /><path d="M6 12h17l-4 10H2z" fill="url(#goldFill)" /></g>,
  cyl: <Roll />,
  split: <g strokeWidth={1.2}><path d="M1 9l5-4h17v11l-4 4H1z" fill="#c8d0fc" stroke="#3a40c8" /><path d="M1 9h18v11M19 9l4-4" fill="none" stroke="#3a40c8" /><path d="M10 9v11M13 5l-2 4v11" stroke="#e02a2a" strokeDasharray="2 1" fill="none" /></g>,
  check: <path d="M1 13l5-3 3 4q4-9 11-13l3 2Q14 12 11 22H6z" fill="#1fbf33" stroke="#109020" strokeWidth={0.6} />,
  prt: <g><path d="M5 5l6-3 4 2v8l7 3v4l-9 4-8-4z" fill="#8ab0ff" stroke="#1a3ad0" strokeWidth={1.3} /><path d="M5 5l5 2v8l4 2v5l-9-3z" fill="#1f4fe0" /></g>,
};

const Icon = ({ name, className = 'size-[18px]' }: { name: string; className?: string }) => (
  <svg viewBox="0 0 24 24" className={clsx('flex-none', className)} aria-hidden="true">
    {icons[name]}
  </svg>
);

const Caret = ({ className }: { className?: string }) => (
  <svg viewBox="0 0 8 5" className={clsx('h-[5px] w-2 flex-none', className)} aria-hidden="true">
    <path d="M0 0h8L4 5z" fill="#1a1a1a" />
  </svg>
);

const Defs = () => (
  <svg className="absolute size-0" aria-hidden="true">
    <defs>
      <linearGradient id="cylFill"><stop offset="0" stopColor="#7d8cf0" /><stop offset=".4" stopColor="#d8defe" /><stop offset="1" stopColor="#6a7ae8" /></linearGradient>
      <linearGradient id="goldFill"><stop offset="0" stopColor="#f8a030" /><stop offset=".5" stopColor="#ffe48a" /><stop offset="1" stopColor="#f09020" /></linearGradient>
      <linearGradient id="planeFill" x2="1" y2="1"><stop offset="0" stopColor="#c8d8cc" /><stop offset=".5" stopColor="#f2f6f2" /><stop offset="1" stopColor="#b8ccc0" /></linearGradient>
      <linearGradient id="rainbow" x2="0" y2="1"><stop offset="0" stopColor="#f00" /><stop offset=".3" stopColor="#ff0" /><stop offset=".55" stopColor="#0f4" /><stop offset=".75" stopColor="#0cf" /><stop offset="1" stopColor="#00f" /></linearGradient>
    </defs>
  </svg>
);

/* ---------- title bar and tabs ---------- */

const Rule = ({ className }: { className?: string }) => <span className={clsx('w-px flex-none bg-[#d9d9d9]', className)} />;

const QuickButton = ({ icon, width = 'w-6' }: { icon: string; width?: string }) => (
  <button type="button" aria-label={icon} className={clsx('flex h-full flex-none items-center justify-center', width)}>
    <Icon name={icon} className="size-4" />
  </button>
);

const TitleBar = () => (
  <header className="flex h-[30px] items-center bg-white">
    <span className="w-[46px] flex-none pl-1 font-['Liberation_Sans',sans-serif] text-[24px] leading-none font-bold text-[#8698a6]">NX</span>
    <Rule className="h-[22px]" />
    <QuickButton icon="save" width="w-[31px]" />
    <Rule className="h-[22px]" />
    <QuickButton icon="undo" width="w-7" />
    <Caret className="mr-[2px] ml-px" />
    <QuickButton icon="redo" width="w-6" />
    <Rule className="mr-1 h-[22px]" />
    <QuickButton icon="cut" />
    <QuickButton icon="copy" />
    <QuickButton icon="paste" />
    <QuickButton icon="move" />
    <Rule className="h-[22px]" />
    <QuickButton icon="exit" width="w-7" />
    <Caret className="mr-[2px] ml-px" />
    <Rule className="h-[22px]" />
    <QuickButton icon="hand" width="w-7" />
    <Rule className="h-[22px]" />
    <button type="button" className="ml-[6px] flex flex-none items-center gap-[5px] text-sm">
      <Icon name="switch" className="size-4" />
      切换窗口
    </button>
    <button type="button" className="ml-[7px] flex flex-none items-center gap-[5px] text-sm">
      <Icon name="window" className="size-4" />
      窗口
      <Caret />
    </button>
    <button type="button" aria-label="自定义" className="ml-[6px] flex flex-none flex-col items-center gap-[2px]">
      <span className="h-px w-2 bg-[#1a1a1a]" />
      <Caret />
    </button>
    <h1 className="min-w-0 flex-1 text-center text-[15px] leading-none whitespace-nowrap text-[#1a1a1a]">NX 12 - 建模</h1>
    <span className="mr-[19px] flex-none font-['Noto_Sans',sans-serif] text-base leading-none font-bold text-[#009999]">SIEMENS</span>
    <button type="button" aria-label="最小化" className="flex w-[30px] flex-none justify-center pt-2">
      <span className="h-[2px] w-2 bg-[#444]" />
    </button>
    <button type="button" aria-label="还原" className="flex w-[30px] flex-none justify-center">
      <svg viewBox="0 0 12 12" className="size-3" fill="none" stroke="#444" strokeWidth="1.400"><path d="M3.500 3V1h8v6h-2M1 4h8v7H1zM1 5h8" /></svg>
    </button>
    <button type="button" aria-label="关闭" className="mr-[2px] flex w-[30px] flex-none justify-center">
      <svg viewBox="0 0 12 12" className="size-3" fill="none" stroke="#444" strokeWidth="1.600"><path d="M1 1l10 10M11 1L1 11" /></svg>
    </button>
  </header>
);

const tabs = ['主页', '装配', '曲线', '曲面', '分析', '视图', '渲染', '工具', '应用模块', '注塑模向导', '星空 V6.936F'];

const TabBar = () => (
  <nav className="flex h-8 items-center bg-[#dcdcdc] text-base">
    <button type="button" className="mr-[2px] h-full w-[91px] flex-none bg-[#55a1bb] pr-1 text-base text-white">文件(F)</button>
    {tabs.map((tab, i) => (
      <button
        key={tab}
        type="button"
        className={clsx('h-full flex-none px-[13px] whitespace-nowrap', i === 0 ? 'border-t border-[#8e8e8e] bg-white text-[#00688b]' : 'text-[#262626]')}
      >
        {tab}
      </button>
    ))}
    <label className="ml-auto flex h-6 w-[157px] flex-none items-center border border-[#a0a0a0] bg-white pr-1">
      <input type="text" placeholder="查找命令" aria-label="查找命令" className="min-w-0 flex-1 pl-px text-sm leading-none outline-none placeholder:text-[#a6a6a6]" />
      <Icon name="search" className="size-4" />
    </label>
    <div className="ml-[6px] flex flex-none pr-px">
      <QuickButton icon="full" width="w-[27px]" />
      <QuickButton icon="up" width="w-[27px]" />
      <QuickButton icon="help" width="w-[27px]" />
    </div>
  </nav>
);

/* ---------- ribbon ---------- */

interface GroupProps {
  label?: string;
  width: string;
  children: React.ReactNode;
}

const Group = ({ label, width, children }: GroupProps) => (
  <section className={clsx('flex h-[97px] flex-none flex-col border-r border-[#d9d9d9]', width)}>
    <div className="flex h-[82px] flex-none">{children}</div>
    {label && (
      <div className="flex h-4 flex-none items-center text-sm leading-4 text-[#00688b]">
        <span className="min-w-0 flex-1 text-center whitespace-nowrap">{label}</span>
        <button type="button" aria-label={`${label} 选项`} className="flex w-6 flex-none justify-center">
          <Caret />
        </button>
      </div>
    )}
  </section>
);

interface BigProps {
  icon: string;
  label: string;
  width: string;
  menu?: boolean;
  boxed?: boolean;
  disabled?: boolean;
}

const Big = ({ icon, label, width, menu, boxed, disabled }: BigProps) => (
  <button type="button" disabled={disabled} className={clsx('flex flex-none flex-col items-center text-sm leading-4 whitespace-nowrap', width, disabled && 'text-[#c0c0c0]')}>
    {boxed ? (
      <span className="flex h-[34px] w-9 items-center justify-center rounded border border-[#d4d4d4]">
        <Icon name={icon} className="size-4" />
      </span>
    ) : (
      <span className="flex h-[34px] items-center">
        <Icon name={icon} className="size-[30px]" />
      </span>
    )}
    <span className="mt-[5px]">{label}</span>
    {menu && <Caret className="mt-[6px]" />}
  </button>
);

const Small = ({ icon, label, menu }: { icon: string; label: string; menu?: boolean }) => (
  <button type="button" className="flex h-5 items-center text-sm leading-5 whitespace-nowrap">
    <span className="mr-[2px] flex w-5 justify-center">
      <Icon name={icon} className="size-4" />
    </span>
    {label}
    {menu && <Caret className="ml-2" />}
  </button>
);

const Column = ({ width, children }: { width: string; children: React.ReactNode }) => (
  <div className={clsx('flex flex-none flex-col gap-[6px]', width)}>{children}</div>
);

const IconGrid = ({ rows }: { rows: string[][] }) => (
  <div className="flex flex-col gap-[13px] pt-2 pl-1">
    {rows.map((row, r) => (
      <div key={r} className="flex h-[18px]">
        {row.map((name, i) =>
          name === '|' ? (
            <Rule key={i} className="mx-[2px]" />
          ) : (
            <button key={i} type="button" aria-label={name} className="flex w-[23px] flex-none items-center justify-center">
              <Icon name={name} className="size-[18px] overflow-visible" />
            </button>
          ),
        )}
      </div>
    ))}
  </div>
);

const Gallery = () => (
  <svg viewBox="0 0 116 77" className="h-[77px] w-[116px] flex-none border border-[#d4d4d4]" fill="none" stroke="#444" strokeWidth="1.500">
    <path d="M9 7v14q0 6 6 6t6-6V17q0-4 4-4t3 4v4" />
    <path d="M47 12h20v14H47zM88 27L104 11M10 49q16 2 18 17M97 49v18M88 58h18" />
    <circle cx={57} cy={58} r={10} />
    <g fill="#d9342b" stroke="none">
      <circle cx={9} cy={20} r={2.500} /><circle cx={20} cy={20} r={2.500} /><circle cx={28} cy={20} r={2.500} />
      <circle cx={47} cy={12} r={2.500} /><circle cx={67} cy={26} r={2.500} /><circle cx={88} cy={27} r={2.500} />
      <circle cx={104} cy={11} r={2.500} /><circle cx={10} cy={49} r={2.500} /><circle cx={23} cy={53} r={2.500} /><circle cx={28} cy={66} r={2.500} />
    </g>
  </svg>
);

const Ribbon = () => (
  <div className="flex h-[106px] border-b border-[#d9d9d9] bg-white pt-[5px] text-[#1a1a1a]">
    <Group label="直接草图" width="w-[200px]">
      <Big icon="sketch" label="草图" width="w-[58px]" />
      <Gallery />
      <div className="flex w-[22px] flex-col items-center justify-between py-[10px]">
        <Caret className="rotate-180 opacity-50" />
        <Caret />
        <span className="flex flex-col gap-[2px]">
          <span className="h-px bg-[#1a1a1a]" />
          <Caret />
        </span>
      </div>
    </Group>
    <Group label="特征" width="w-[412px]">
      <div className="flex pl-2">
        <Big icon="plane" label="基准平面" width="w-16" menu />
        <Big icon="extrude" label="拉伸" width="w-10" menu />
        <Big icon="hole" label="孔" width="w-10" />
        <span className="w-[5px] flex-none" />
        <Column width="w-[84px]">
          <Small icon="pattern" label="阵列特征" />
          <Small icon="unite" label="合并" menu />
          <Small icon="shell" label="抽壳" />
        </Column>
        <Big icon="blend" label="边倒圆" width="w-12" menu />
        <span className="w-1 flex-none" />
        <Column width="w-[70px]">
          <Small icon="chamfer" label="倒斜角" />
          <Small icon="trim" label="修剪体" />
          <Small icon="draft" label="拔模" />
        </Column>
        <Big icon="more1" label="更多" width="w-12" menu boxed />
      </div>
    </Group>
    <Group label="同步建模" width="w-[192px]">
      <div className="flex pl-[3px]">
        <Big icon="moveFace" label="移动面" width="w-14" />
        <Column width="w-[86px]">
          <Small icon="offset" label="偏置区域" />
          <Small icon="replace" label="替换面" />
          <Small icon="delFace" label="删除面" />
        </Column>
        <Big icon="more2" label="更多" width="w-[46px]" menu boxed />
      </div>
    </Group>
    <Group label="标准化工具..." width="w-[104px]">
      <IconGrid rows={[['gcTree', 'layers', 'layersDoc', '|', 'tag'], ['gcPart', 'gcHammer', 'gcBox', '|', 'gcEdit']]} />
    </Group>
    <Group label="齿..." width="w-[52px]">
      <IconGrid rows={[['gear1', 'gear2'], ['gearHand']]} />
    </Group>
    <Group label="弹..." width="w-[58px]">
      <IconGrid rows={[['springV', 'springD'], ['disc', '|', 'springX']]} />
    </Group>
    <Group label="加..." width="w-[52px]">
      <IconGrid rows={[['camCheck', 'camDoc'], ['camTable', 'csys']]} />
    </Group>
    <Group label="建模工具 ..." width="w-[98px]">
      <IconGrid rows={[['tri', 'tblTri', 'folderX', 'folderO'], ['note', 'brush', '|', 'bino']]} />
    </Group>
    <Group label="'." width="w-[29px]">
      <IconGrid rows={[['boxes'], ['boxes']]} />
    </Group>
    <Group label="尺寸快速格式化工具 - GC工具箱" width="w-[288px]">
      <IconGrid
        rows={[
          ['dimAll', '|', 'x', 'd1', 'd2', 'd3', 'd4', 'boxX', 'parX', 'h7', 'h7a', 'h7b', 'h7c'],
          ['dimR', 'dimRR', '|', 'dia', 'dia2', 'back'],
        ]}
      />
    </Group>
    <Group width="w-[43px]">
      <Big icon="surface" label="曲面" width="w-[42px]" menu />
    </Group>
    <Group label="装配" width="w-[205px]">
      <div className="flex pl-2">
        <Big icon="processAsm" label="处理装配" width="w-16" disabled />
        <Big icon="addAsm" label="添加" width="w-10" menu />
        <span className="w-1 flex-none" />
        <Column width="w-[86px]">
          <Small icon="constrain" label="装配约束" />
          <Small icon="moveComp" label="移动组件" />
          <Small icon="patComp" label="阵列组件" />
        </Column>
      </div>
    </Group>
    <div className="flex flex-1 items-end justify-end pr-[7px] pb-2">
      <Caret />
    </div>
  </div>
);

/* ---------- selection bar ---------- */

interface Tool {
  icon: string;
  on?: boolean;
}

const selectTools: Tool[] = [
  { icon: 'snapAll', on: true },
  { icon: 'snapEnd', on: true },
  { icon: 'snapMid', on: true },
  { icon: 'snapTan' },
  { icon: 'snapPoly', on: true },
  { icon: 'snapSpline', on: true },
  { icon: 'snapInt' },
  { icon: 'snapCen', on: true },
  { icon: 'snapQuad' },
  { icon: 'snapPt', on: true },
  { icon: 'snapCrv', on: true },
  { icon: 'snapSrf' },
  { icon: 'snapFac' },
  { icon: 'snapGrid' },
];

const ToolButton = ({ icon, on }: Tool) => (
  <button type="button" aria-label={icon} className="flex w-[25px] flex-none justify-center">
    <span className={clsx('flex h-[23px] w-6 items-center justify-center', on && 'border border-[#a9d3dd] bg-[#cde6ec]')}>
      <Icon name={icon} className="size-4" />
    </span>
  </button>
);

const Picker = ({ value, label, width }: { value: string; label: string; width: string }) => (
  <label className={clsx('relative flex flex-none items-center', width)}>
    <select aria-label={label} defaultValue={value} className="h-6 w-full appearance-none border border-[#a0a0a0] bg-white pl-[2px] text-sm leading-none">
      <option>{value}</option>
    </select>
    <Caret className="pointer-events-none absolute right-[7px]" />
  </label>
);

const SelectionBar = () => (
  <div className="flex h-9 items-center border-b border-[#87979c] bg-white text-[#1a1a1a]">
    <button type="button" className="flex w-[99px] flex-none items-center pl-[10px] text-sm">
      <Icon name="menu" className="mr-1 size-4" />
      <span>菜单(<u>M</u>)</span>
      <Caret className="ml-1" />
    </button>
    <Rule className="mr-3 h-7" />
    <Picker label="选择过滤器" value="无选择过滤器" width="w-[167px]" />
    <span className="w-[9px] flex-none" />
    <Picker label="选择范围" value="整个装配" width="w-[176px]" />
    <span className="w-[2px] flex-none" />
    <ToolButton icon="s1" />
    <ToolButton icon="s2" />
    <ToolButton icon="s3" />
    <Caret className="mr-[7px]" />
    <ToolButton icon="s4" />
    <ToolButton icon="s5" />
    <ToolButton icon="s6" />
    <ToolButton icon="s7" />
    <Caret className="mr-1" />
    <ToolButton icon="s8" />
    <ToolButton icon="s9" />
    {selectTools.map((tool) => (
      <ToolButton key={tool.icon} {...tool} />
    ))}
    <Rule className="mx-[7px] h-7" />
    {['fit', 'pan', 'rotate', 'persp', 'grayA', 'layout'].map((icon) => (
      <ToolButton key={icon} icon={icon} />
    ))}
    <Caret className="mx-[2px]" />
    {['shade', 'cube', 'clip'].map((icon) => (
      <div key={icon} className="flex items-center pl-[3px]">
        <ToolButton icon={icon} />
        <Caret className="mx-[2px]" />
      </div>
    ))}
    <Rule className="ml-2 h-7" />
    <Caret className="mt-3 mr-[7px] ml-auto" />
  </div>
);

/* ---------- resource bar and part navigator ---------- */

const resources = [
  { icon: 'gear', height: 'h-6', size: 'size-4' },
  { icon: 'asmNav', height: 'h-[76px]', size: 'size-6' },
  { icon: 'conNav', height: 'h-[10px]', size: 'size-[22px]' },
  { icon: 'partNav', height: 'h-[45px]', size: 'size-6', active: true },
  { icon: 'books', height: 'h-10', size: 'size-6' },
  { icon: 'eye', height: 'h-[42px]', size: 'size-6' },
  { icon: 'info', height: 'h-[70px]', size: 'size-[26px]' },
  { icon: 'page', height: 'h-[38px]', size: 'size-6' },
  { icon: 'clock', height: 'h-[68px]', size: 'size-6' },
  { icon: 'colors', height: 'h-[18px]', size: 'size-6' },
  { icon: 'weld', height: 'h-[68px]', size: 'size-6' },
  { icon: 'tools', height: 'h-[14px]', size: 'size-6' },
];

const ResourceBar = () => (
  <aside className="flex w-8 flex-none flex-col border-r border-[#a0a0a0] bg-[#dcdcdc]">
    {resources.map(({ icon, height, size, active }) => (
      <button
        key={icon}
        type="button"
        aria-label={icon}
        className={clsx(
          'flex flex-none items-center justify-center',
          height,
          active ? 'mt-[14px] -mr-px ml-[2px] border-y border-l border-[#a0a0a0] bg-white pr-px' : 'pl-[3px]',
        )}
      >
        <Icon name={icon} className={size} />
      </button>
    ))}
  </aside>
);

interface TreeRow {
  label: string;
  icon: string;
  root?: 'plus' | 'minus';
  tick?: boolean;
  muted?: boolean;
  bold?: boolean;
}

const treeRows: TreeRow[] = [
  { label: '模型视图', icon: 'views', root: 'plus' },
  { label: '摄像机', icon: 'camera', root: 'plus', tick: true },
  { label: '非时间戳记几何体', icon: 'folder', root: 'plus' },
  { label: '模型历史记录', icon: 'folder', root: 'minus' },
  { label: '基准坐标系 (0)', icon: 'csys' },
  { label: '圆柱 (1)', icon: 'cyl' },
  { label: '边倒圆 (2)', icon: 'blend' },
  { label: '圆柱 (3)', icon: 'cyl' },
  { label: '圆柱 (4)', icon: 'cyl' },
  { label: '圆柱 (5)', icon: 'cyl' },
  { label: '圆柱 (6)', icon: 'cyl' },
  { label: '减去 (7)', icon: 'subtract' },
  { label: '壳 (8)', icon: 'shell' },
  { label: '拉伸 (9)', icon: 'extrude' },
  { label: '拉伸 (10)', icon: 'extrude' },
  { label: '减去 (11)', icon: 'subtract' },
  { label: '拉伸 (17)', icon: 'extrude', muted: true },
  { label: '拆分体 (18)', icon: 'split', bold: true },
];

const EMPTY_ROWS = 8;

const RootCell = ({ row }: { row: TreeRow }) => (
  <div className="flex h-[23px] items-center pl-1">
    <button type="button" aria-label={row.root === 'plus' ? '展开' : '折叠'} className="mr-[3px] flex size-[11px] flex-none items-center justify-center border border-[#d0d0d0] bg-white">
      <svg viewBox="0 0 9 9" className="size-[9px]" stroke="#111" strokeWidth="1.200">
        <path d={row.root === 'plus' ? 'M1 4.500h7M4.500 1v7' : 'M1 4.500h7'} />
      </svg>
    </button>
    {row.tick && <Icon name="check" className="mr-px ml-[2px] size-[14px]" />}
    <Icon name={row.icon} className={clsx('size-4', row.tick ? 'mr-[2px]' : 'mr-1')} />
    {row.label}
  </div>
);

const FeatureCell = ({ row, last }: { row: TreeRow; last: boolean }) => {
  const [checked, setChecked] = useState(true);

  return (
    <label className="flex h-[23px] items-center pl-7">
      <span className={clsx('flex-none border-l border-dotted border-[#8e8e8e]', last ? 'mb-[11px] h-3' : '-mb-px h-6')} />
      <span className="mr-[3px] w-2 flex-none border-t border-dotted border-[#8e8e8e]" />
      <span className="relative flex size-3 flex-none">
        <input
          type="checkbox"
          checked={checked}
          onChange={() => setChecked(!checked)}
          className="size-3 appearance-none border border-black bg-white"
        />
        {checked && <Icon name="check" className="pointer-events-none absolute top-px left-px size-[10px]" />}
      </span>
      <Icon name={row.icon} className="mr-[3px] ml-[2px] size-4" />
      <span className={clsx(row.muted && 'text-[#a3a3a3]', row.bold && 'font-bold')}>{row.label}</span>
    </label>
  );
};

const FeatureTree = () => (
  <div className="ml-[6px] w-[306px] flex-none border border-[#d0d0d0] p-px">
    <table className="w-full table-fixed border-separate border-spacing-0 text-[15px] leading-[22px] text-[#1a1a1a]">
      <colgroup>
        <col className="w-[200px]" />
        <col className="w-[100px]" />
        <col />
      </colgroup>
      <thead>
        <tr className="h-6 bg-[#f0f0f0] text-left">
          <th className="h-6 border-r border-b border-[#d0d0d0] p-0 pl-[5px] font-normal">
            <span className="flex items-center gap-[18px]">
              名称
              <svg viewBox="0 0 10 6" className="h-[6px] w-[10px]"><path d="M0 6h10L5 0z" fill="#1a1a1a" /></svg>
            </span>
          </th>
          <th className="h-6 border-r border-b border-[#d0d0d0] p-0 pl-[6px] font-normal">最新</th>
          <th className="border-b border-[#d0d0d0] p-0" />
        </tr>
      </thead>
      <tbody>
        {treeRows.map((row, i) => (
          <tr key={row.label} className="h-6 odd:bg-white even:bg-[#fafafa]">
            <td className="h-6 overflow-visible border-r border-b border-[#ebebeb] p-0 whitespace-nowrap">
              {row.root ? <RootCell row={row} /> : <FeatureCell row={row} last={i === treeRows.length - 1} />}
            </td>
            <td className="h-6 border-r border-b border-[#ebebeb] p-0 pl-[6px]">
              {!row.root && <Icon name="check" className="size-[13px]" />}
            </td>
            <td className="border-b border-[#ebebeb] p-0" />
          </tr>
        ))}
        {Array.from({ length: EMPTY_ROWS }, (_, i) => (
          <tr key={i} className="h-6 odd:bg-white even:bg-[#fafafa]">
            <td className="h-6 border-r border-b border-[#ebebeb] p-0" />
            <td className="h-6 border-r border-b border-[#ebebeb] p-0" />
            <td className="border-b border-[#ebebeb] p-0" />
          </tr>
        ))}
      </tbody>
    </table>
    <div className="mt-1 flex h-5 items-center bg-[#f0f0f0]">
      <button type="button" aria-label="向左滚动" className="flex w-[21px] justify-center">
        <svg viewBox="0 0 8 10" className="h-[10px] w-2" fill="none" stroke="#444" strokeWidth="2"><path d="M6 1L2 5l4 4" /></svg>
      </button>
      <span className="h-[18px] w-[196px] bg-[#cdcdcd]" />
      <button type="button" aria-label="向右滚动" className="ml-auto flex w-[21px] justify-center">
        <svg viewBox="0 0 8 10" className="h-[10px] w-2" fill="none" stroke="#444" strokeWidth="2"><path d="M2 1l4 4-4 4" /></svg>
      </button>
    </div>
  </div>
);

const PartNavigator = () => (
  <section className="flex w-[322px] flex-none flex-col border-r border-[#9a9a9a] bg-white">
    <div className="flex h-[31px] flex-none items-center justify-between pt-px pr-4 pl-[10px] text-[15px] text-[#262626]">
      部件导航器
      <button type="button" aria-label="最大化" className="size-[14px] border border-[#222]" />
    </div>
    <FeatureTree />
    <div className="mb-px ml-[6px] h-[5px] w-[306px] flex-none border border-[#a6a6a6] bg-[#d9d9d9]" />
    {['相关性', '细节', '预览'].map((name) => (
      <button
        key={name}
        type="button"
        className="ml-[6px] flex h-7 w-[306px] flex-none items-center justify-between border-b-2 border-[#cfcfcf] pt-[2px] pr-[6px] pl-[7px] text-lg leading-none text-[#00688b]"
      >
        {name}
        <svg viewBox="0 0 14 12" className="h-3 w-[14px]" fill="none" stroke="#00688b" strokeWidth="3"><path d="M1 0l6 9 6-9" /></svg>
      </button>
    ))}
  </section>
);

/* ---------- graphics window ---------- */

const Model = () => (
  <svg viewBox="0 0 1380 1050" className="absolute top-[220px] left-[31%] w-[460px]" role="img" aria-label="剖切实体">
    <defs>
      <linearGradient id="bore">
        <stop offset="0" stopColor="#e48800" /><stop offset=".13" stopColor="#f09000" /><stop offset=".22" stopColor="#ff9e04" />
        <stop offset=".45" stopColor="#ffa90a" /><stop offset=".66" stopColor="#ff9d07" /><stop offset=".76" stopColor="#e48a02" />
        <stop offset=".86" stopColor="#c47400" /><stop offset="1" stopColor="#b66a00" />
      </linearGradient>
      <linearGradient id="fillet">
        <stop offset="0" stopColor="#f89600" /><stop offset=".2" stopColor="#ffb000" /><stop offset=".45" stopColor="#ffc408" />
        <stop offset=".75" stopColor="#ffb804" /><stop offset=".9" stopColor="#ff9c04" /><stop offset="1" stopColor="#d07c00" />
      </linearGradient>
      <linearGradient id="lip" x2="0" y2="1"><stop offset="0" stopColor="#f89400" stopOpacity=".7" /><stop offset=".5" stopColor="#ffb400" stopOpacity="0" /></linearGradient>
      <radialGradient id="gloss"><stop offset="0" stopColor="#fff63a" /><stop offset="1" stopColor="#ffd010" stopOpacity="0" /></radialGradient>
    </defs>
    <path d="M90 75L660 82L1297 100L1225 112L1217 500L150 475L157 80Z" fill="url(#bore)" />
    <path d="M149 470L660 476L1217 493Q1215 580 1125 587L388 573L240 569Q152 560 149 470Z" fill="url(#fillet)" />
    <path d="M149 470L660 476L1217 493Q1215 580 1125 587L388 573L240 569Q152 560 149 470Z" fill="url(#lip)" />
    <ellipse cx={520} cy={509} rx={230} ry={38} fill="url(#gloss)" />
    <ellipse cx={870} cy={519} rx={220} ry={32} fill="url(#gloss)" opacity=".45" />
    <path d="M386 573L972 584L963 950L958 988L386 976Z" fill="url(#bore)" />
    <path d="M95 895l160 0 58 4v6L67 899zM1037 911l243 10v5l-243-8z" fill="#f99a0a" />
    <path d="M157 80L660 85L1225 101M149 470L400 470L700 477L1217 493M240 568L690 573L971 583M386 940L700 943L963 951M388 976L700 977L958 987" fill="none" stroke="#3a3a3a" strokeWidth="3" />
    <g fill="#d6ff9e">
      <path d="M87 77L157 79L149 475Q152 566 240 569L388 573L384 940L388 976L67 969V898L312 903L317 642L235 640C130 636 77 560 77 480Z" />
      <path d="M1226 101L1298 102L1290 510C1285 600 1220 658 1130 659H1043L1037 915L1280 923L1279 995L958 988L965 950L971 584L1125 587C1180 585 1217 545 1217 495Z" />
    </g>
    <g fill="none" stroke="#0a0aff" strokeWidth="5">
      <path d="M688 220L683 376M484 373L481 575" stroke="#8a6aa8" strokeWidth="4" />
      <path d="M484 373L683 376L681 580L290 570M478 575L700 579" />
      <path d="M679 222h18l-9-44zM329 562v18l-46-10zM662 576h28l-14 22z" fill="#0a0aff" stroke="none" />
      <path d="M680 144h20L680 171h20M250 555l21 28M271 555l-21 28" stroke="#3020ff" strokeWidth="4" />
    </g>
  </svg>
);

const ViewTriad = () => (
  <svg viewBox="0 0 60 60" className="absolute bottom-[57px] left-[10px] size-[60px]" role="img" aria-label="视图三重轴">
    <rect x={27} y={27} width={25} height={27} fill="#a9abab" />
    <path d="M53 53V16" stroke="#1040ff" strokeWidth={3} />
    <path d="M50 20h6l-3-9zM50 2h6l-6 7h6" fill="#1040ff" stroke="#1040ff" strokeWidth={0.800} />
    <path d="M52 53H26" stroke="#e87a7a" strokeWidth={2} />
    <path d="M27 53l-7-3-10 3 10 3z" fill="#d22a2a" />
    <path d="M2 49l7 8M9 49l-7 8" stroke="#c83a3a" strokeWidth={1.200} />
    <circle cx={53} cy={53} r={4} fill="#dfe8df" />
    <circle cx={52.500} cy={53.500} r={2.500} fill="#1f8a2f" />
  </svg>
);

const GraphicsWindow = () => (
  <main className="flex min-w-0 flex-1 flex-col border-l border-[#d9d9d9]">
    <div className="flex h-[26px] flex-none border-b-2 border-[#55a1bb] bg-white">
      <div className="flex w-[228px] items-center bg-[#55a1bb] pt-px pl-[5px] text-[15px] text-white">
        <Icon name="prt" className="mr-1 size-4" />
        <span className="whitespace-nowrap">R8倒扣避空位练习用.prt</span>
        <svg viewBox="0 0 12 14" className="ml-2 h-3 w-[10px] flex-none" fill="none" stroke="#fff" strokeWidth="2"><path d="M10 4V2H1v11h8v-3M5 8h5V4" /></svg>
        <button type="button" aria-label="关闭" className="ml-[6px] flex-none">
          <svg viewBox="0 0 10 10" className="size-2" stroke="#fff" strokeWidth="2.600"><path d="M1 1l8 8M9 1L1 9" /></svg>
        </button>
      </div>
    </div>
    <div className="relative flex-1 overflow-hidden bg-linear-to-b from-[#242526] from-0% via-[#4c4d4e] via-70% to-[#58595b] to-90%">
      <Model />
      <ViewTriad />
      <div className="absolute top-[440px] right-[2px] flex h-[76px] w-3 flex-col justify-end rounded-full border-2 border-[#8e8e8e] bg-[#333435]">
        <span className="h-[10px] rounded-full bg-linear-to-b from-[#19a84c] to-[#72f072]" />
      </div>
    </div>
  </main>
);

/* ---------- status line and Windows taskbar ---------- */

const StatusBar = () => (
  <div className="flex h-6 flex-none items-center border-t border-[#a6a6a6] bg-white pb-px pl-[3px] text-sm leading-none font-bold text-[#1a1a1a]">
    <span>选择对象并使用 MB3，或者双击某一对象</span>
    <span className="ml-auto flex gap-1 pr-[55px]">
      <svg viewBox="0 0 16 16" className="size-4"><rect width={16} height={16} fill="#d8d8d8" /><path d="M3 4l9 8M12 3l-8 9M5 3l8 2-3 8z" fill="none" stroke="#999" /></svg>
      <Icon name="full" className="size-4" />
    </span>
  </div>
);

const taskIcons: Record<string, React.ReactNode> = {
  view: <g fill="none" stroke="#fff" strokeWidth={1.300}><path d="M4 3v4h14V3M4 25v-4h14v4M4 10h14v8H4zM23 3v6M23 15v10" /><rect x={22} y={11} width={2} height={2} fill="#fff" /></g>,
  fan: (
    <g fill="#e6e6e6" stroke="#0c0c0c" strokeWidth={0.800}>
      <path d="M14 14Q4 14 2 7Q4 0 11 1Q16 5 14 14Z" />
      <path d="M14 14Q10 4 16 1Q25 0 27 7Q26 12 14 14Z" />
      <path d="M14 14Q22 9 28 12Q29 20 23 22Q16 22 14 14Z" />
      <path d="M14 14Q21 22 17 27Q8 29 5 24Q6 19 14 14Z" />
      <path d="M14 14Q8 22 3 21Q-1 15 1 9Q6 13 14 14Z" />
    </g>
  ),
  ie: <g><path d="M24 19q-2 6-10 6-9-1-9-10T14 6q10 0 10 11H10q1 4 4 4 3 0 4-2zM10 13h8q0-3-4-3t-4 3z" fill="#2f8ff0" /><path d="M24 7q1-5-4-4Q8 7 4 20q-2 7 4 5" fill="none" stroke="#4ab0ff" strokeWidth={2} /></g>,
  edge: <path d="M2 14Q4 2 15 2q11 1 11 13v3H10q1 5 7 5 4 0 8-2v5q-4 2-9 2Q5 27 4 18q0-5 6-8-2 3-2 4h11q0-6-6-6-7 0-11 6z" fill="#0f7bd8" />,
  files: <g><path d="M1 3h10l2 2h15v20H1z" fill="#f5c33a" /><path d="M1 7h27v18H1z" fill="#ffe59a" /><path d="M3 3h8v2H3z" fill="#fff" /><path d="M6 27V15h18v12h-4v-7H10v7z" fill="#38b0e8" /></g>,
  nx: <g><circle cx={14} cy={15} r={11} fill="#1f9ae8" /><path d="M4 12q5-6 12-5l4 6-5 9-5 4q-7-7-6-14z" fill="#48d0f4" /><path d="M17 5q8 3 8 10l-5 7-4-7z" fill="#2fae4a" /><path d="M3 0h15l-5 13z" fill="#d81f4a" stroke="#8a0f2a" strokeWidth={0.600} /><path d="M2 26q14 1 23-9 5-7 1-10" fill="none" stroke="#f5a623" strokeWidth={2.600} /><path d="M0 26l6-4v7z" fill="#f5a623" /></g>,
  paint: <g><path d="M2 20q-3-8 5-13 9-4 16 1 6 6 1 12-4 6-9 5 1-5-3-4-4 4-10-1z" fill="#d8ecf8" stroke="#6aa0c8" /><Dot x={6} y={15} r={2.400} /><Dot x={10} y={10} r={2.400} c="#5ab02a" /><Dot x={17} y={9} r={2.400} c="#f0a81a" /><path d="M15 28L23 5l3 1-8 22z" fill="#e0872a" /><path d="M22 2l4-2 3 3-2 4h-4z" fill="#b08a5a" /></g>,
};

const tasks = [
  { id: 'view', label: '任务视图' },
  { id: 'fan', label: '浏览器' },
  { id: 'ie', label: 'Internet Explorer' },
  { id: 'edge', label: 'Edge', running: true },
  { id: 'files', label: '文件资源管理器', running: true },
  { id: 'nx', label: 'NX', running: true, active: true },
  { id: 'paint', label: '画图', running: true },
];

const TrayIcon = ({ children }: { children: React.ReactNode }) => (
  <svg viewBox="0 0 20 20" className="mx-[5px] size-5 flex-none" fill="none" stroke="#fff" strokeWidth="1.300">
    {children}
  </svg>
);

const Taskbar = () => (
  <footer className="flex h-[50px] flex-none bg-[#0c0c0c] text-white">
    <button type="button" aria-label="开始" className="flex w-[60px] flex-none items-center justify-center">
      <svg viewBox="0 0 20 20" className="size-5" fill="#fff"><path d="M0 3l8-1v7H0zM9 2l11-2v9H9zM0 10h8v7l-8-1zM9 10h11v10L9 18z" /></svg>
    </button>
    <label className="flex w-[430px] flex-none items-center bg-[#f2f2f2] pr-[17px] pl-[11px]">
      <span className="size-7 flex-none rounded-full border-[4px] border-black" />
      <input type="text" placeholder="在这里输入你要搜索的内容" aria-label="搜索" className="ml-[11px] min-w-0 flex-1 text-[19px] text-black outline-none placeholder:text-[#333]" />
      <svg viewBox="0 0 16 22" className="h-[22px] w-4 flex-none" fill="none" stroke="#222" strokeWidth="1.500"><rect x={4.500} y={1} width={7} height={13} rx={1.500} /><path d="M1.500 10v4q0 3 3 3h7q3 0 3-3v-4M8 17v3M4 21h8" /></svg>
    </label>
    <div className="flex">
      {tasks.map(({ id, label, running, active }) => (
        <button
          key={id}
          type="button"
          aria-label={label}
          className={clsx('relative flex flex-none items-center', id === 'ie' ? 'w-[71px] pl-[18px]' : 'w-[62px] justify-center', active && 'bg-[#3d3d3d]')}
        >
          <svg viewBox="0 0 29 28" className={clsx('flex-none', id === 'view' || id === 'files' ? 'size-7' : 'size-[26px]')}>{taskIcons[id]}</svg>
          {id === 'ie' && <svg viewBox="0 0 5 9" className="ml-3 h-[9px] w-[5px]"><path d="M0 0l5 4.500L0 9z" fill="#1f78f0" /></svg>}
          {running && <span className={clsx('absolute bottom-0 h-[3px] bg-[#76b5ee]', active ? 'inset-x-0' : 'inset-x-[5px]')} />}
        </button>
      ))}
    </div>
    <div className="ml-auto flex items-center">
      <TrayIcon><path d="M2 13l8-8 8 8" /></TrayIcon>
      <TrayIcon><path d="M1 12q0-3 3-3 1-5 6-5 4 0 5 4 4 1 4 4 0 3-3 3H4q-3 0-3-3z" fill="#fff" /></TrayIcon>
      <TrayIcon><path d="M5 7h13v8H5M19 9v4M1 3v4h4V3M2 1v2M4 1v2M3 7v4" /><rect x={7} y={9} width={9} height={4} fill="#fff" stroke="none" /></TrayIcon>
      <TrayIcon><path d="M3 17Q3 5 16 4M7 17q0-8 9-9M11 17q0-4 5-5" /><circle cx={15} cy={16} r={1.500} fill="#fff" /></TrayIcon>
      <TrayIcon><path d="M1 7h3l5-4v13l-5-4H1zM12 7q2 3 0 5M14 5q4 4 0 9M17 3q5 6 0 13" /></TrayIcon>
      <span className="w-8 flex-none text-center text-[17px]">英</span>
      <span className="mx-[11px] flex h-[18px] w-[18px] flex-none items-center justify-center bg-white text-[17px] leading-none text-black">M</span>
      <div className="w-[98px] flex-none text-center text-[15px] leading-[23px]">
        <div>8:56</div>
        <div>2019/3/21</div>
      </div>
      <button type="button" aria-label="通知" className="mx-[13px] flex-none">
        <svg viewBox="0 0 22 20" className="h-5 w-[22px]" fill="none" stroke="#fff" strokeWidth="1.300"><path d="M1 1h20v14h-7l-3 4v-4H1z" /></svg>
      </button>
      <span className="mr-[5px] ml-[11px] h-[50px] w-px bg-[#555]" />
    </div>
  </footer>
);

const Watermark = () => (
  <div className="pointer-events-none absolute right-[24px] bottom-[13px] flex items-center">
    <svg viewBox="0 0 216 246" className="h-[82px] w-[72px] flex-none" strokeWidth="3">
      <g stroke="#31424c" strokeOpacity=".5">
        <path d="M45 38L108 0L150 24Q160 40 165 75Q110 25 45 38Z" fill="#8fb0c2" opacity=".85" />
        <path d="M150 24L216 62V75Q190 90 165 75Q160 45 150 24Z" fill="#1f86b8" opacity=".9" />
        <path d="M165 75Q190 90 216 75V184L175 165V92Z" fill="#7fd0f8" opacity=".85" />
        <path d="M175 155L214 180L108 246Q75 215 55 180L108 200Z" fill="#0f6a96" opacity=".9" />
        <path d="M45 92V160L55 180Q75 215 108 246L0 184V165Q10 130 45 92Z" fill="#4888a8" opacity=".85" />
        <path d="M0 165V62L45 38Q80 28 110 48L45 92Q10 125 0 165Z" fill="#9edcfa" opacity=".8" />
      </g>
      <path d="M108 68L156 94L108 122L60 94Z" fill="#bfe8fc" />
      <path d="M60 96L107 123V178L60 152Z" fill="#6fb4d8" />
      <path d="M156 96L109 123V178L156 152Z" fill="#0f6a96" />
      <path d="M60 95L108 122L156 95M108 122V178" fill="none" stroke="#fff" />
    </svg>
    <div className="ml-2 w-[179px] flex-none text-white opacity-50">
      <div className="text-[42px] leading-[46px] font-bold whitespace-nowrap">3D世界网</div>
      <div className="font-['Liberation_Sans',sans-serif] text-lg leading-4 whitespace-nowrap">WWW.3DSJW.COM</div>
    </div>
  </div>
);

const App: React.FC = () => (
  <div className="relative flex min-h-screen flex-col overflow-hidden bg-white font-['Open_Sans','Noto_Sans_CJK_SC',sans-serif]">
    <Defs />
    <TitleBar />
    <TabBar />
    <Ribbon />
    <SelectionBar />
    <div className="flex flex-1">
      <ResourceBar />
      <PartNavigator />
      <GraphicsWindow />
    </div>
    <StatusBar />
    <Taskbar />
    <Watermark />
  </div>
);

export default App;
